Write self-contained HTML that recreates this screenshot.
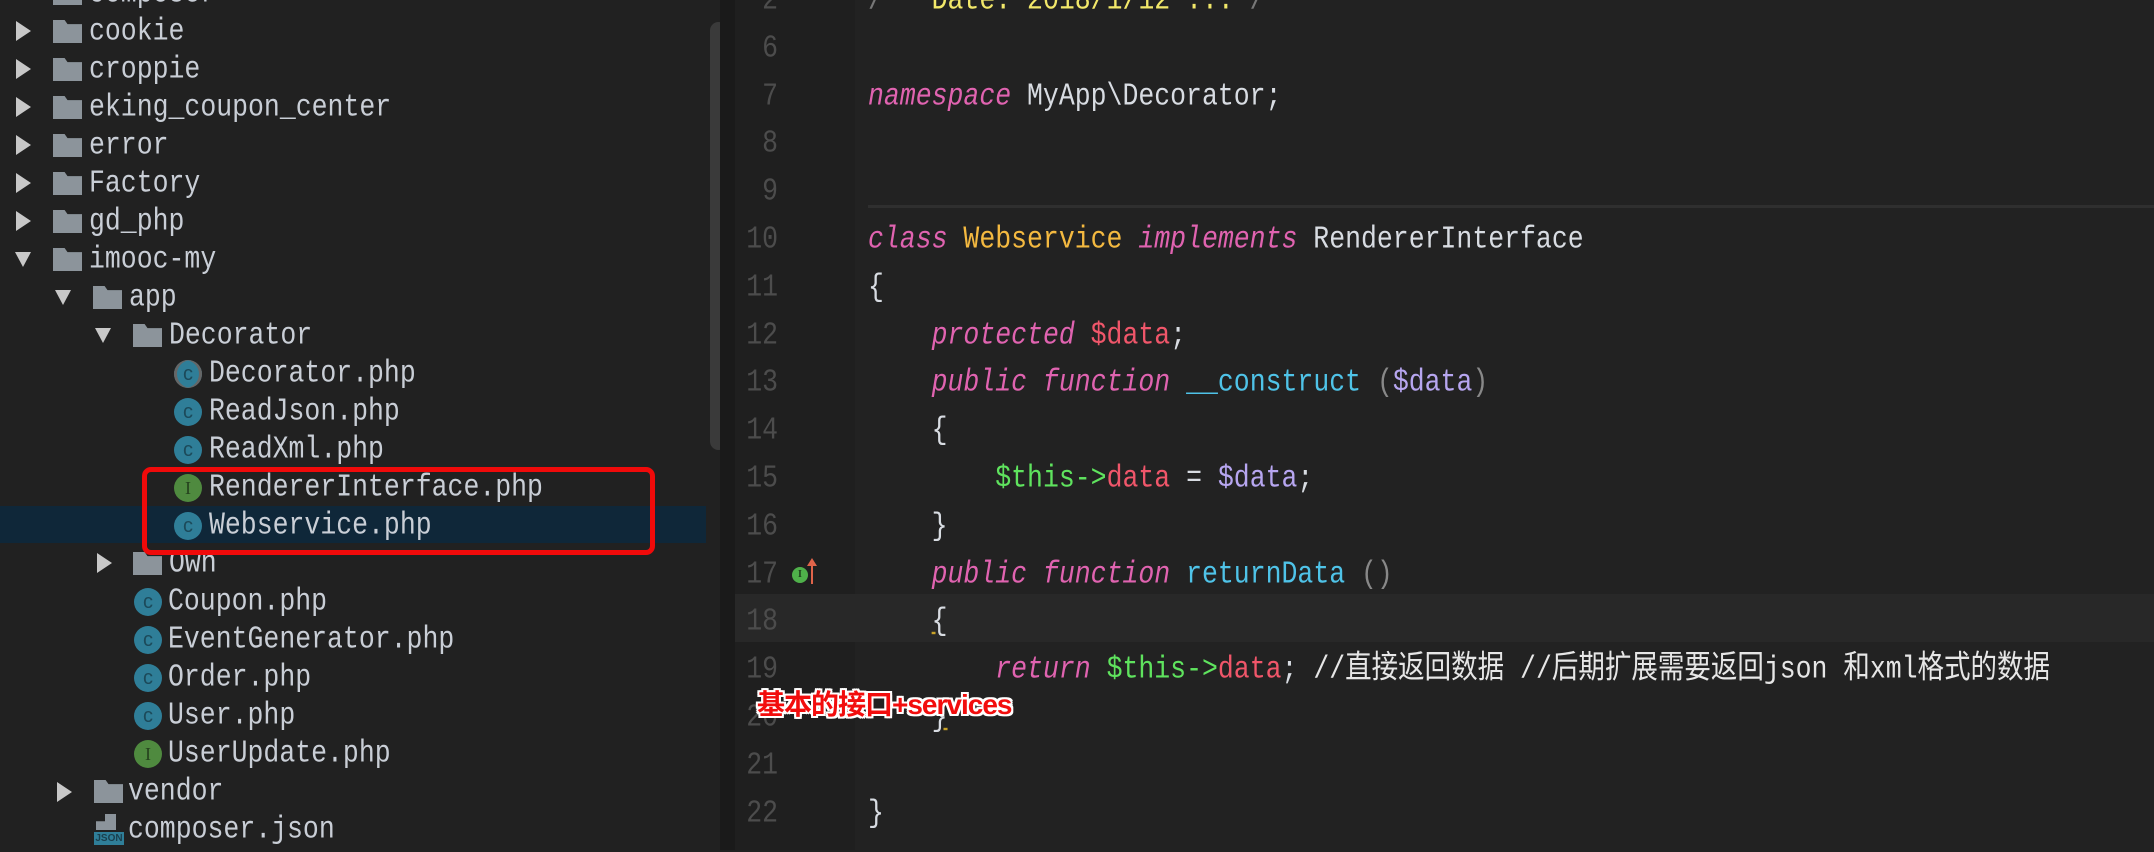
<!DOCTYPE html>
<html><head><meta charset="utf-8"><style>
*{margin:0;padding:0;box-sizing:border-box}
body{width:2154px;height:850px;background:#222;overflow:hidden;position:relative;font-family:"Liberation Mono","Noto Sans CJK SC",monospace;font-size:26.5px}
.abs{position:absolute}
#side{left:0;top:0;width:720px;height:850px;background:#212121}
.r{position:absolute;height:38px;line-height:38px;color:#c9ced6;white-space:pre;transform:scaleY(1.2)}
.ar{position:absolute;width:0;height:0}
.ar.rt{border-top:10px solid transparent;border-bottom:10px solid transparent;border-left:15px solid #c8c8c8}
.ar.dn{border-left:8px solid transparent;border-right:8px solid transparent;border-top:15px solid #c8c8c8}
.fd{position:absolute;width:29px;height:23px;background:#8c949b;clip-path:polygon(0 0,40% 0,50% 18%,100% 18%,100% 100%,0 100%)}
.ci{position:absolute;width:28px;height:28px;border-radius:50%;background:#2f7e98;color:#1c4a5a;font-size:20px;line-height:28px;text-align:center;font-family:"Liberation Sans",sans-serif}
.ci.i{background:#4f8a3f;color:#25421e;font-family:"Liberation Serif",serif;font-size:18px}
.ln{position:absolute;left:735px;width:43px;text-align:right;color:#4c4c4c;height:48px;line-height:48px;transform:scaleY(1.2)}
.cl{position:absolute;left:868px;height:48px;line-height:48px;color:#d8dce2;white-space:pre;transform:scaleY(1.2);transform-origin:left center}
.k{color:#e063b0;font-style:italic}
.y{color:#f4b940}
.rd{color:#f0566a}
.cy{color:#4fc3e8}
.lv{color:#b7a6f0}
.g{color:#5fe35e}
.w{color:#e6e6e6}
</style></head><body>
<div class="abs" id="side"></div>
<div class="abs" style="left:0;top:506px;width:706px;height:37px;background:#0f2739"></div>
<div class="abs" style="left:710px;top:22px;width:17px;height:428px;border-radius:9px;background:#3a3a3a"></div>
<div class="abs" style="left:720px;top:0;width:15px;height:850px;background:#1a1a1a"></div>
<div class="abs" style="left:735px;top:0;width:120px;height:850px;background:#1f1f1f"></div>
<div class="abs" style="left:868px;top:205px;width:1286px;height:3px;background:#2f2f2f"></div>
<div class="abs" style="left:735px;top:594px;width:1419px;height:48px;background:#282828"></div>

<div class="r" style="top:-26px;left:89px">composer</div><div class="fd" style="left:53px;top:-18px"></div>
<div class="ar rt" style="left:16px;top:21px"></div><div class="fd" style="left:53px;top:20px"></div><div class="r" style="top:12px;left:89px">cookie</div>
<div class="ar rt" style="left:16px;top:59px"></div><div class="fd" style="left:53px;top:58px"></div><div class="r" style="top:50px;left:89px">croppie</div>
<div class="ar rt" style="left:16px;top:97px"></div><div class="fd" style="left:53px;top:96px"></div><div class="r" style="top:88px;left:89px">eking_coupon_center</div>
<div class="ar rt" style="left:16px;top:135px"></div><div class="fd" style="left:53px;top:134px"></div><div class="r" style="top:126px;left:89px">error</div>
<div class="ar rt" style="left:16px;top:173px"></div><div class="fd" style="left:53px;top:172px"></div><div class="r" style="top:164px;left:89px">Factory</div>
<div class="ar rt" style="left:16px;top:211px"></div><div class="fd" style="left:53px;top:210px"></div><div class="r" style="top:202px;left:89px">gd_php</div>
<div class="ar dn" style="left:15px;top:252px"></div><div class="fd" style="left:53px;top:248px"></div><div class="r" style="top:240px;left:89px">imooc-my</div>
<div class="ar dn" style="left:55px;top:290px"></div><div class="fd" style="left:93px;top:286px"></div><div class="r" style="top:278px;left:129px">app</div>
<div class="ar dn" style="left:95px;top:328px"></div><div class="fd" style="left:133px;top:324px"></div><div class="r" style="top:316px;left:169px">Decorator</div>
<div class="ci" style="left:174px;top:360px;box-shadow:inset 3px 0 0 #666,inset -3px 0 0 #666">c</div><div class="r" style="top:354px;left:209px">Decorator.php</div>
<div class="ci" style="left:174px;top:398px">c</div><div class="r" style="top:392px;left:209px">ReadJson.php</div>
<div class="ci" style="left:174px;top:436px">c</div><div class="r" style="top:430px;left:209px">ReadXml.php</div>
<div class="ci i" style="left:174px;top:474px">I</div><div class="r" style="top:468px;left:209px">RendererInterface.php</div>
<div class="ci" style="left:174px;top:512px">c</div><div class="r" style="top:506px;left:209px">Webservice.php</div>
<div class="ar rt" style="left:97px;top:553px"></div><div class="fd" style="left:133px;top:552px"></div><div class="r" style="top:544px;left:169px">Own</div>
<div class="ci" style="left:134px;top:588px">c</div><div class="r" style="top:582px;left:168px">Coupon.php</div>
<div class="ci" style="left:134px;top:626px">c</div><div class="r" style="top:620px;left:168px">EventGenerator.php</div>
<div class="ci" style="left:134px;top:664px">c</div><div class="r" style="top:658px;left:168px">Order.php</div>
<div class="ci" style="left:134px;top:702px">c</div><div class="r" style="top:696px;left:168px">User.php</div>
<div class="ci i" style="left:134px;top:740px">I</div><div class="r" style="top:734px;left:168px">UserUpdate.php</div>
<div class="ar rt" style="left:57px;top:782px"></div><div class="fd" style="left:94px;top:780px"></div><div class="r" style="top:772px;left:128px">vendor</div>
<div class="abs" style="left:96px;top:814px;width:20px;height:16px;background:#8c949b;clip-path:polygon(45% 0,100% 0,100% 100%,0 100%,0 45%,45% 45%)"></div>
<div class="abs" style="left:94px;top:832px;width:30px;height:13px;background:#2f7e98;color:#1a3f4d;font:bold 10px/13px 'Liberation Sans',sans-serif;text-align:center">JSON</div>
<div class="r" style="top:810px;left:128px">composer.json</div>

<div class="abs" style="left:142px;top:467px;width:513px;height:88px;border:5px solid #f00a0a;border-radius:9px"></div>

<div class="ln" style="top:-24px">2</div>
<div class="ln" style="top:24px">6</div>
<div class="ln" style="top:72px">7</div>
<div class="ln" style="top:119px">8</div>
<div class="ln" style="top:167px">9</div>
<div class="ln" style="top:215px">10</div>
<div class="ln" style="top:263px">11</div>
<div class="ln" style="top:311px">12</div>
<div class="ln" style="top:358px">13</div>
<div class="ln" style="top:406px">14</div>
<div class="ln" style="top:454px">15</div>
<div class="ln" style="top:502px">16</div>
<div class="ln" style="top:550px">17</div>
<div class="ln" style="top:597px">18</div>
<div class="ln" style="top:645px">19</div>
<div class="ln" style="top:693px">20</div>
<div class="ln" style="top:741px">21</div>
<div class="ln" style="top:789px">22</div>
<div class="abs" style="left:792px;top:567px;width:16px;height:16px;border-radius:50%;background:#4fb04a;color:#1d3d1b;font:bold 10px/16px 'Liberation Serif',serif;text-align:center">I</div>
<div class="abs" style="left:811px;top:563px;width:2px;height:21px;background:#e0644a"></div>
<div class="abs" style="left:807px;top:558px;width:0;height:0;border-left:5px solid transparent;border-right:5px solid transparent;border-bottom:8px solid #e0644a"></div>

<div class="cl" style="top:-24px"><span style="color:#777">/**</span> <span style="color:#f2e86a">Date: 2018/1/12 ...</span><span style="color:#777">*/</span></div>
<div class="cl" style="top:72px"><span class="k">namespace</span> MyApp\Decorator;</div>
<div class="cl" style="top:215px"><span class="k">class</span> <span class="y">Webservice</span> <span class="k">implements</span> RendererInterface</div>
<div class="cl" style="top:263px">{</div>
<div class="cl" style="top:311px">    <span class="k">protected</span> <span class="rd">$data</span>;</div>
<div class="cl" style="top:358px">    <span class="k">public</span> <span class="k">function</span> <span class="cy">__construct</span> <span style="color:#888">(</span><span class="lv">$data</span><span style="color:#888">)</span></div>
<div class="cl" style="top:406px">    {</div>
<div class="cl" style="top:454px">        <span class="g">$this-&gt;</span><span class="rd">data</span> = <span class="lv">$data</span>;</div>
<div class="cl" style="top:502px">    }</div>
<div class="cl" style="top:550px">    <span class="k">public</span> <span class="k">function</span> <span class="cy">returnData</span> <span style="color:#888">()</span></div>
<div class="cl" style="top:597px">    <span style="text-decoration:underline;text-decoration-color:#c9a227">{</span></div>
<div class="cl" style="top:645px">        <span class="k">return</span> <span class="g">$this-&gt;</span><span class="rd">data</span>; <span class="w">//直接返回数据 //后期扩展需要返回json 和xml格式的数据</span></div>
<div class="cl" style="top:693px">    <span style="text-decoration:underline;text-decoration-color:#c9a227">}</span></div>
<div class="cl" style="top:789px">}</div>

<div class="abs" style="left:757px;top:688px;height:34px;font:bold 28px/34px 'Liberation Sans','Noto Sans CJK SC',sans-serif;color:#f20d0d;white-space:nowrap;letter-spacing:-1px;text-shadow:2px 0 0 #fff,-2px 0 0 #fff,0 2px 0 #fff,0 -2px 0 #fff,2px 2px 0 #fff,-2px -2px 0 #fff,2px -2px 0 #fff,-2px 2px 0 #fff">基本的接口+services</div>
</body></html>
